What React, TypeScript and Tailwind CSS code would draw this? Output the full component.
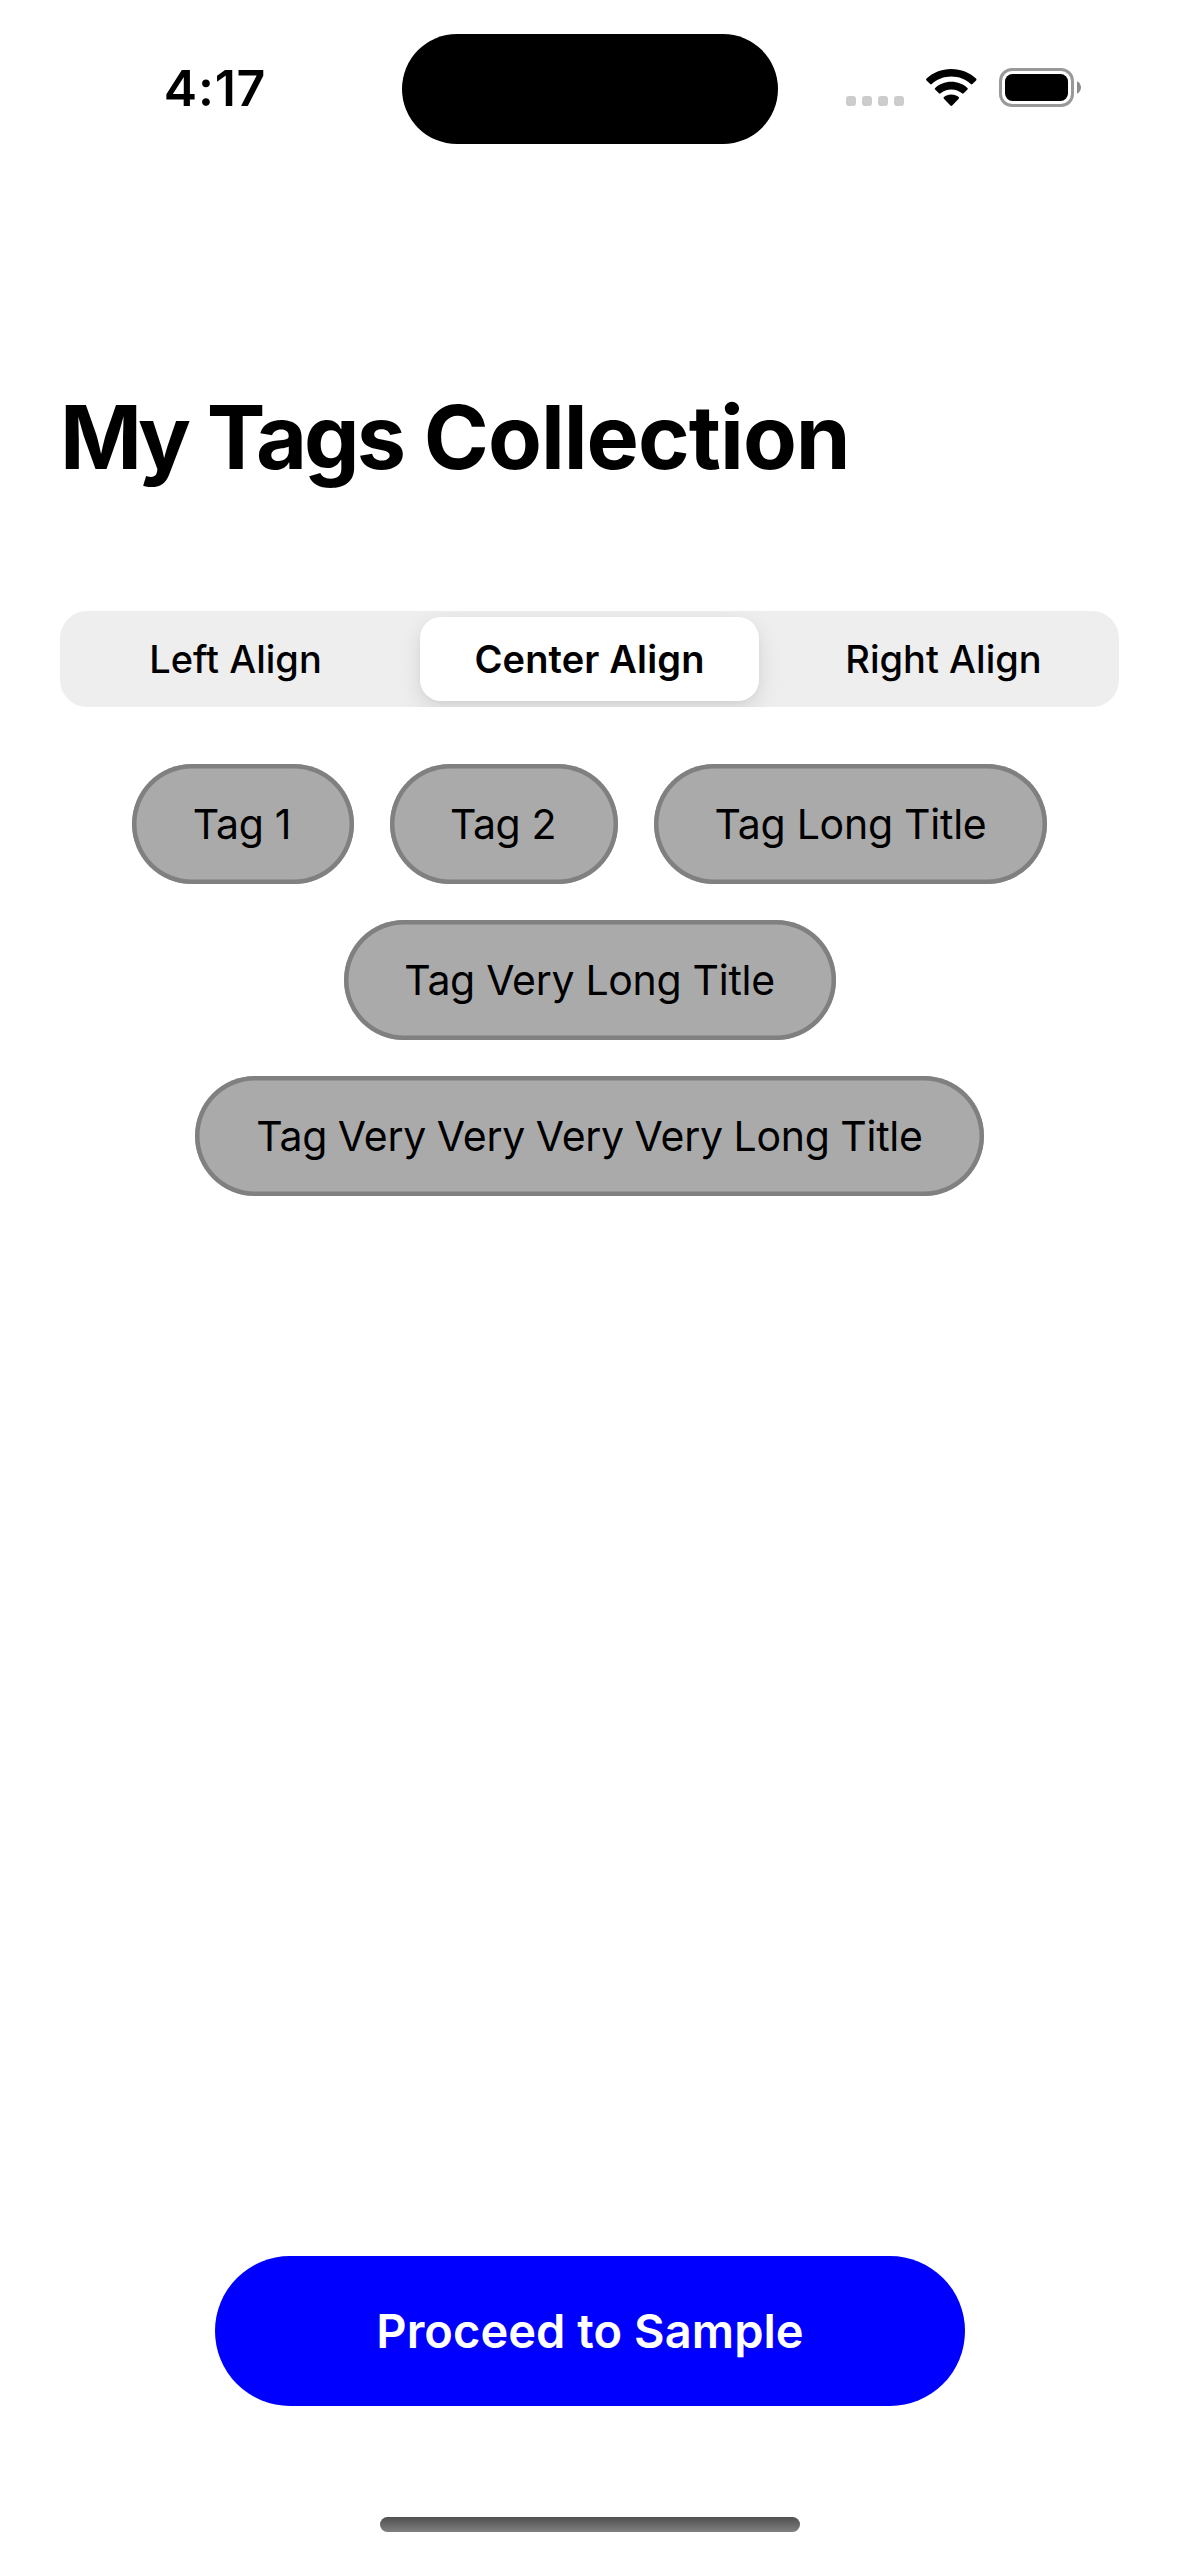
import { useState } from "react";

const alignments = [
  { id: "left", label: "Left Align", justify: "justify-start", tracking: "tracking-[0.02px]" },
  { id: "center", label: "Center Align", justify: "justify-center", tracking: "tracking-[0.15px]" },
  { id: "right", label: "Right Align", justify: "justify-end", tracking: "tracking-[0.02px]" },
];

const tags = [
  { label: "Tag 1", size: "w-[222px] pr-0.5", tracking: "tracking-[-0.3px]" },
  { label: "Tag 2", size: "w-[228px] pr-0.5", tracking: "tracking-[-0.4px]" },
  { label: "Tag Long Title", size: "w-[393px]", tracking: "tracking-[-0.25px]" },
  { label: "Tag Very Long Title", size: "w-[492px]", tracking: "tracking-[-0.3px]" },
  { label: "Tag Very Very Very Very Long Title", size: "w-[789px]", tracking: "tracking-[-0.25px] [word-spacing:-0.6px]" },
];

function SignalDots() {
  return (
    <div className="flex gap-1.5">
      {[0, 1, 2, 3].map((dot) => (
        <span key={dot} className="size-2.5 rounded-[3px] bg-[#cccccc]" />
      ))}
    </div>
  );
}

function WifiIcon() {
  return (
    <svg width="51" height="38" viewBox="0 0 51 38" fill="#000">
      <path d="M25.3 0C35 0 43.8 3.7 50 9.6Q50.9 10.5 50.1 11.4L46.4 15.1Q45.6 15.8 44.8 15C39.5 10.3 32.8 7.6 25.3 7.6S11.1 10.3 5.8 15Q5 15.8 4.2 15.1L.5 11.4Q-.3 10.5.6 9.6C6.8 3.7 15.6 0 25.3 0Z" />
      <path d="M25.3 12.8C31.7 12.8 37.2 15.1 41.4 18.9Q42.3 19.7 41.5 20.6L37.7 24.3Q36.9 25 36 24.3C33.1 21.9 29.5 20.4 25.3 20.4S17.5 21.9 14.6 24.3Q13.7 25 12.9 24.3L9.1 20.6Q8.3 19.7 9.2 18.9C13.4 15.1 18.9 12.8 25.3 12.8Z" />
      <path d="M25.3 25.5C28.3 25.5 30.8 26.5 32.7 28Q33.5 28.8 32.7 29.7L26.2 36.5Q25.3 37.4 24.4 36.5L17.9 29.7Q17.1 28.8 17.9 28C19.8 26.5 22.3 25.5 25.3 25.5Z" />
    </svg>
  );
}

function BatteryIcon() {
  return (
    <svg width="82" height="39" viewBox="0 0 82 39">
      <rect x="1.5" y="1.5" width="72" height="36" rx="11.5" fill="none" stroke="#999" strokeWidth="3" />
      <rect x="6" y="6" width="63" height="27" rx="7.5" fill="#000" />
      <path d="M78 13.3C80.3 14.3 82 16.7 82 19.5S80.3 24.7 78 25.7Z" fill="#8c8c8c" />
    </svg>
  );
}

function StatusBar() {
  return (
    <header className="flex h-[177px] items-start">
      <div className="flex w-[402px] justify-center pt-[58px] pl-[28px]">
        <span className="text-[50px] leading-[60px] font-semibold tracking-[0.8px]">4:17</span>
      </div>
      <div className="mt-[33.5px] h-[110.5px] w-[375.5px] rounded-full bg-black" />
      <div className="flex pt-[68px] pl-[68.5px]">
        <div className="pt-7">
          <SignalDots />
        </div>
        <div className="ml-[22px] pt-px">
          <WifiIcon />
        </div>
        <div className="ml-[22px]">
          <BatteryIcon />
        </div>
      </div>
    </header>
  );
}

export default function App() {
  const [active, setActive] = useState("center");
  const current = alignments.find((a) => a.id === active) ?? alignments[1];

  return (
    <div className="flex h-[2556px] w-[1179px] flex-col bg-white font-[Inter,sans-serif] text-black">
      <StatusBar />
      <main className="flex grow flex-col px-[60px]">
        <h1 className="mt-[205px] text-[88px] leading-[110px] font-bold tracking-[-1px] whitespace-nowrap [word-spacing:1px]">
          <span className="tracking-[-5px]">My</span> <span className="tracking-[-3px]">Tags</span> Collection
        </h1>
        <div className="mt-[119px] flex h-24 shrink-0 justify-between overflow-hidden rounded-[27px] bg-[#eeeeee] p-1.5">
          {alignments.map((a) => (
            <button
              key={a.id}
              onClick={() => setActive(a.id)}
              className={
                a.id === active
                  ? "w-[339px] rounded-[21px] bg-white text-[38px] font-semibold shadow-[0_8px_22px_rgba(0,0,0,0.11),0_2px_4px_rgba(0,0,0,0.03)]"
                  : "w-[339px] rounded-[21px] text-[38px] font-[450]"
              }
            >
              <span className={a.tracking}>{a.label}</span>
            </button>
          ))}
        </div>
        <div className={"mt-[57px] flex flex-wrap gap-9 " + current.justify}>
          {tags.map((tag) => (
            <div
              key={tag.label}
              className={
                "flex h-[120px] items-center justify-center rounded-full bg-[#aaaaaa] pt-0.5 text-[41px] whitespace-nowrap inset-ring-[4.5px] inset-ring-[#808080] " +
                tag.size
              }
            >
              <span className={tag.tracking}>{tag.label}</span>
            </div>
          ))}
        </div>
        <button className="mt-auto mb-[111px] h-[150px] w-[750px] self-center rounded-full bg-[#0000ff] pl-px text-[47px] font-semibold tracking-[0.05px] text-white">
          Proceed to Sample
        </button>
      </main>
      <div className="mb-6 h-[15px] w-[420px] self-center rounded-full bg-linear-to-b from-[#505050] to-[#808080]" />
    </div>
  );
}
